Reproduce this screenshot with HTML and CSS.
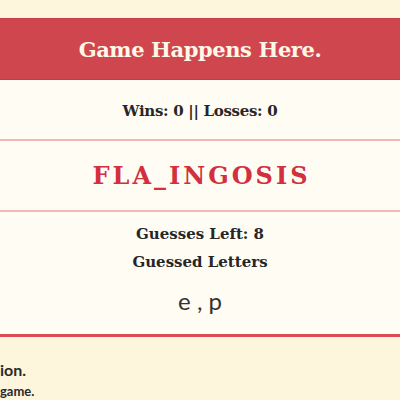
FILE: index.html
```html
<!DOCTYPE html>
<html>
<head>
<meta charset="utf-8">
<link rel="stylesheet" href="styles.css">
</head>
<body>
<div class="page">
  <div class="card">
    <header class="card-head">
      <h1 class="title">Game Happens Here.</h1>
    </header>
    <section class="row score">Wins: 0 || Losses: 0</section>
    <section class="row word">FLA_INGOSIS</section>
    <section class="row info">
      <div class="left">Guesses Left: 8</div>
      <div class="label">Guessed Letters</div>
      <div class="letters">e , p</div>
    </section>
  </div>
  <div class="notes">
    <p class="n1">ion.</p>
    <p class="n2">game.</p>
  </div>
</div>
</body>
</html>
```

FILE: styles.css
```css
html, body {
  margin: 0;
  padding: 0;
  background: #fdf5dc;
}
.page {
  padding-top: 18px;
  font-family: "DejaVu Serif", serif;
}
.card {
  background: #fffcf4;
  border-bottom: 3px solid #dd4a51;
}
.card-head {
  background: #d0464f;
  border-top: 1px solid #c63c45;
  border-bottom: 1px solid #c63c45;
  height: 60px;
  display: flex;
  align-items: center;
  justify-content: center;
}
.title {
  margin: 0;
  color: #fff8e6;
  font-size: 21px;
  font-weight: bold;
  letter-spacing: -0.4px;
}
.row {
  text-align: center;
  color: #262626;
  font-weight: bold;
}
.score {
  height: 61px;
  font-size: 15px;
  letter-spacing: -0.3px;
  border-bottom: 2px solid #f3b9b9;
  box-sizing: border-box;
  display: flex;
  align-items: center;
  justify-content: center;
  padding-top: 2px;
}
.word {
  height: 71px;
  display: flex;
  align-items: center;
  justify-content: center;
  color: #d22f3f;
  font-size: 24px;
  letter-spacing: 3px;
  border-bottom: 2px solid #f3b9b9;
  box-sizing: border-box;
  padding-left: 3px;
}
.info {
  padding-top: 9px;
  height: 122px;
  box-sizing: border-box;
}
.left {
  font-size: 15px;
  line-height: 26px;
}
.label {
  font-size: 15px;
  line-height: 30px;
}
.letters {
  font-family: "Lato", sans-serif;
  font-weight: 400;
  font-size: 24px;
  line-height: 48px;
  color: #333;
}
.notes {
  padding-top: 22px;
  font-family: "Lato", sans-serif;
  color: #2a2a2a;
}
.notes p {
  margin: 0;
}
.n1 {
  font-size: 16px;
  font-weight: bold;
  line-height: 22px;
}
.n2 {
  font-size: 13px;
  font-weight: bold;
  line-height: 20px;
}
```
